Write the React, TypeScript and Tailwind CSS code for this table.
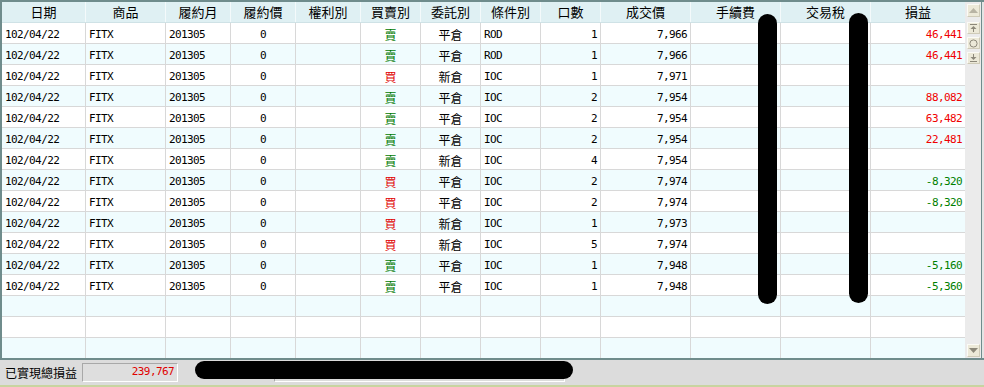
import React from "react";

type Row = {
  side: "買" | "賣";
  open: "平倉" | "新倉";
  cond: string;
  qty: string;
  price: string;
  pl: string;
};

const rows: Row[] = [
  { side: "賣", open: "平倉", cond: "ROD", qty: "1", price: "7,966", pl: "46,441" },
  { side: "賣", open: "平倉", cond: "ROD", qty: "1", price: "7,966", pl: "46,441" },
  { side: "買", open: "新倉", cond: "IOC", qty: "1", price: "7,971", pl: "" },
  { side: "賣", open: "平倉", cond: "IOC", qty: "2", price: "7,954", pl: "88,082" },
  { side: "賣", open: "平倉", cond: "IOC", qty: "2", price: "7,954", pl: "63,482" },
  { side: "賣", open: "平倉", cond: "IOC", qty: "2", price: "7,954", pl: "22,481" },
  { side: "賣", open: "新倉", cond: "IOC", qty: "4", price: "7,954", pl: "" },
  { side: "買", open: "平倉", cond: "IOC", qty: "2", price: "7,974", pl: "-8,320" },
  { side: "買", open: "平倉", cond: "IOC", qty: "2", price: "7,974", pl: "-8,320" },
  { side: "買", open: "新倉", cond: "IOC", qty: "1", price: "7,973", pl: "" },
  { side: "買", open: "新倉", cond: "IOC", qty: "5", price: "7,974", pl: "" },
  { side: "賣", open: "平倉", cond: "IOC", qty: "1", price: "7,948", pl: "-5,160" },
  { side: "賣", open: "平倉", cond: "IOC", qty: "1", price: "7,948", pl: "-5,360" },
];

const cols =
  "grid grid-cols-[84px_80px_65px_65px_65px_60px_60px_60px_60px_90px_90px_90px_94px]";

const headers = ["日期", "商品", "履約月", "履約價", "權利別", "買賣別", "委託別", "條件別", "口數", "成交價", "手續費", "交易稅", "損益"];

const cjk = "font-['Noto_Sans_CJK_TC',sans-serif] text-[12px]";
const mono = "font-['DejaVu_Sans_Mono',monospace] text-[11px] tracking-[-0.6px]";

function Cell({
  children,
  align = "left",
  last = false,
  font = mono,
  color = "text-black",
}: {
  children?: React.ReactNode;
  align?: "left" | "right" | "center";
  last?: boolean;
  font?: string;
  color?: string;
}) {
  const a =
    align === "left" ? "justify-start pl-[3px]" : align === "right" ? "justify-end pr-[3px]" : "justify-center";
  return (
    <div
      className={`flex items-center h-full pt-[3px] overflow-hidden whitespace-nowrap ${a} ${font} ${color} ${
        last ? "" : "border-r border-[#d8d8d8]"
      }`}
    >
      {children}
    </div>
  );
}

function DataRow({ r, i }: { r?: Row; i: number }) {
  const bg = i % 2 === 0 ? "bg-white" : "bg-[#f0fcfe]";
  const plColor = r && r.pl.startsWith("-") ? "text-[#008000]" : "text-[#f00000]";
  return (
    <div className={`${cols} h-[21px] shrink-0 border-b border-[#d8d8d8] ${bg} leading-[16px]`}>
      <Cell>{r ? "102/04/22" : ""}</Cell>
      <Cell>{r ? "FITX" : ""}</Cell>
      <Cell>{r ? "201305" : ""}</Cell>
      <Cell align="center">{r ? "0" : ""}</Cell>
      <Cell />
      <Cell align="center" font={cjk} color={r?.side === "買" ? "text-[#e00000]" : "text-[#007a00]"}>
        {r?.side}
      </Cell>
      <Cell align="center" font={cjk}>
        {r?.open}
      </Cell>
      <Cell>{r?.cond}</Cell>
      <Cell align="right">{r?.qty}</Cell>
      <Cell align="right">{r?.price}</Cell>
      <Cell />
      <Cell />
      <Cell align="right" last color={plColor}>
        {r?.pl}
      </Cell>
    </div>
  );
}

function SBtn({ children, className = "" }: { children: React.ReactNode; className?: string }) {
  return (
    <div
      className={`w-[13px] h-[12px] mx-auto flex items-center justify-center bg-[#ece9d8] border-t border-l border-[#fbfbf6] border-r border-b border-r-[#cfcbb8] border-b-[#cfcbb8] ${className}`}
    >
      {children}
    </div>
  );
}

export default function App() {
  const body: (Row | undefined)[] = [...rows, undefined, undefined, undefined];
  return (
    <div className="w-[984px] h-[387px] bg-[#dcdcdc] relative overflow-hidden flex flex-col">
      {/* grid area */}
      <div className="h-[360px] flex border-t-2 border-l-2 border-b-2 border-[#6f8c8c] shrink-0">
        <div className="w-[963px] flex flex-col overflow-hidden">
          <div className={`${cols} h-[21px] shrink-0 bg-[#dff0f3] border-b border-[#cfe2e6]`}>
            {headers.map((h, i) => (
              <div
                key={h}
                className={`flex items-center justify-center h-full ${cjk} text-[13px] text-black ${
                  i === headers.length - 1 ? "" : "border-r border-[#f4fafb]"
                }`}
              >
                {h}
              </div>
            ))}
          </div>
          <div className="flex flex-col h-[335px] overflow-hidden">
            {body.map((r, i) => (
              <DataRow key={i} r={r} i={i} />
            ))}
          </div>
        </div>
        {/* vertical scrollbar */}
        <div className="w-[16px] bg-[#ebebeb] flex flex-col pt-[2px] pb-[1px]">
          <SBtn className="h-[13px]">
            <svg width="9" height="5" viewBox="0 0 9 5">
              <path d="M0 5 L4.5 0 L9 5 Z" fill="#b8b4a4" />
            </svg>
          </SBtn>
          <SBtn className="mt-[5px]">
            <svg width="9" height="8" viewBox="0 0 9 8">
              <rect x="1" y="0" width="7" height="1" fill="#8c887a" />
              <path d="M1.5 5 L4.5 2 L7.5 5 Z" fill="#8c887a" />
              <rect x="4" y="5" width="1" height="3" fill="#8c887a" />
            </svg>
          </SBtn>
          <SBtn className="mt-[3px]">
            <svg width="9" height="9" viewBox="0 0 9 9">
              <circle cx="4.5" cy="4.5" r="3.6" fill="none" stroke="#8c887a" strokeWidth="1" />
            </svg>
          </SBtn>
          <SBtn className="mt-[3px]">
            <svg width="9" height="8" viewBox="0 0 9 8">
              <rect x="4" y="0" width="1" height="3" fill="#8c887a" />
              <path d="M1.5 3 L4.5 6 L7.5 3 Z" fill="#8c887a" />
              <rect x="1" y="7" width="7" height="1" fill="#8c887a" />
            </svg>
          </SBtn>
          <div className="flex-1" />
          <SBtn className="h-[13px]">
            <svg width="9" height="5" viewBox="0 0 9 5">
              <path d="M0 0 L4.5 5 L9 0 Z" fill="#8c887a" />
            </svg>
          </SBtn>
        </div>
        <div className="w-[3px] border-l border-[#6f8c8c] bg-[#e4e4e4]" />
      </div>

      {/* footer */}
      <div className="h-[25px] flex items-center shrink-0">
        <div className={`pl-[5px] w-[82px] ${cjk} text-black`}>已實現總損益</div>
        <div className="w-[96px] h-[19px] flex items-center justify-end pr-[3px] border-t border-l border-[#a8a8a8] border-r border-b border-r-white border-b-white bg-[#dedede]">
          <span className={`${mono} text-[#e00000]`}>239,767</span>
        </div>
        <div className="ml-[96px] w-[291px] h-[19px] border-t border-l border-[#a8a8a8] border-r border-b border-r-white border-b-white" />
      </div>
      <div className="h-[2px] bg-[#c8d4a0] shrink-0" />

      {/* redactions */}
      <div className="absolute left-[758px] top-[14px] w-[19px] h-[290px] rounded-full bg-black" />
      <div className="absolute left-[849px] top-[13px] w-[19px] h-[290px] rounded-full bg-black" />
      <div className="absolute left-[195px] top-[361px] w-[378px] h-[18px] rounded-full bg-black" />
    </div>
  );
}
